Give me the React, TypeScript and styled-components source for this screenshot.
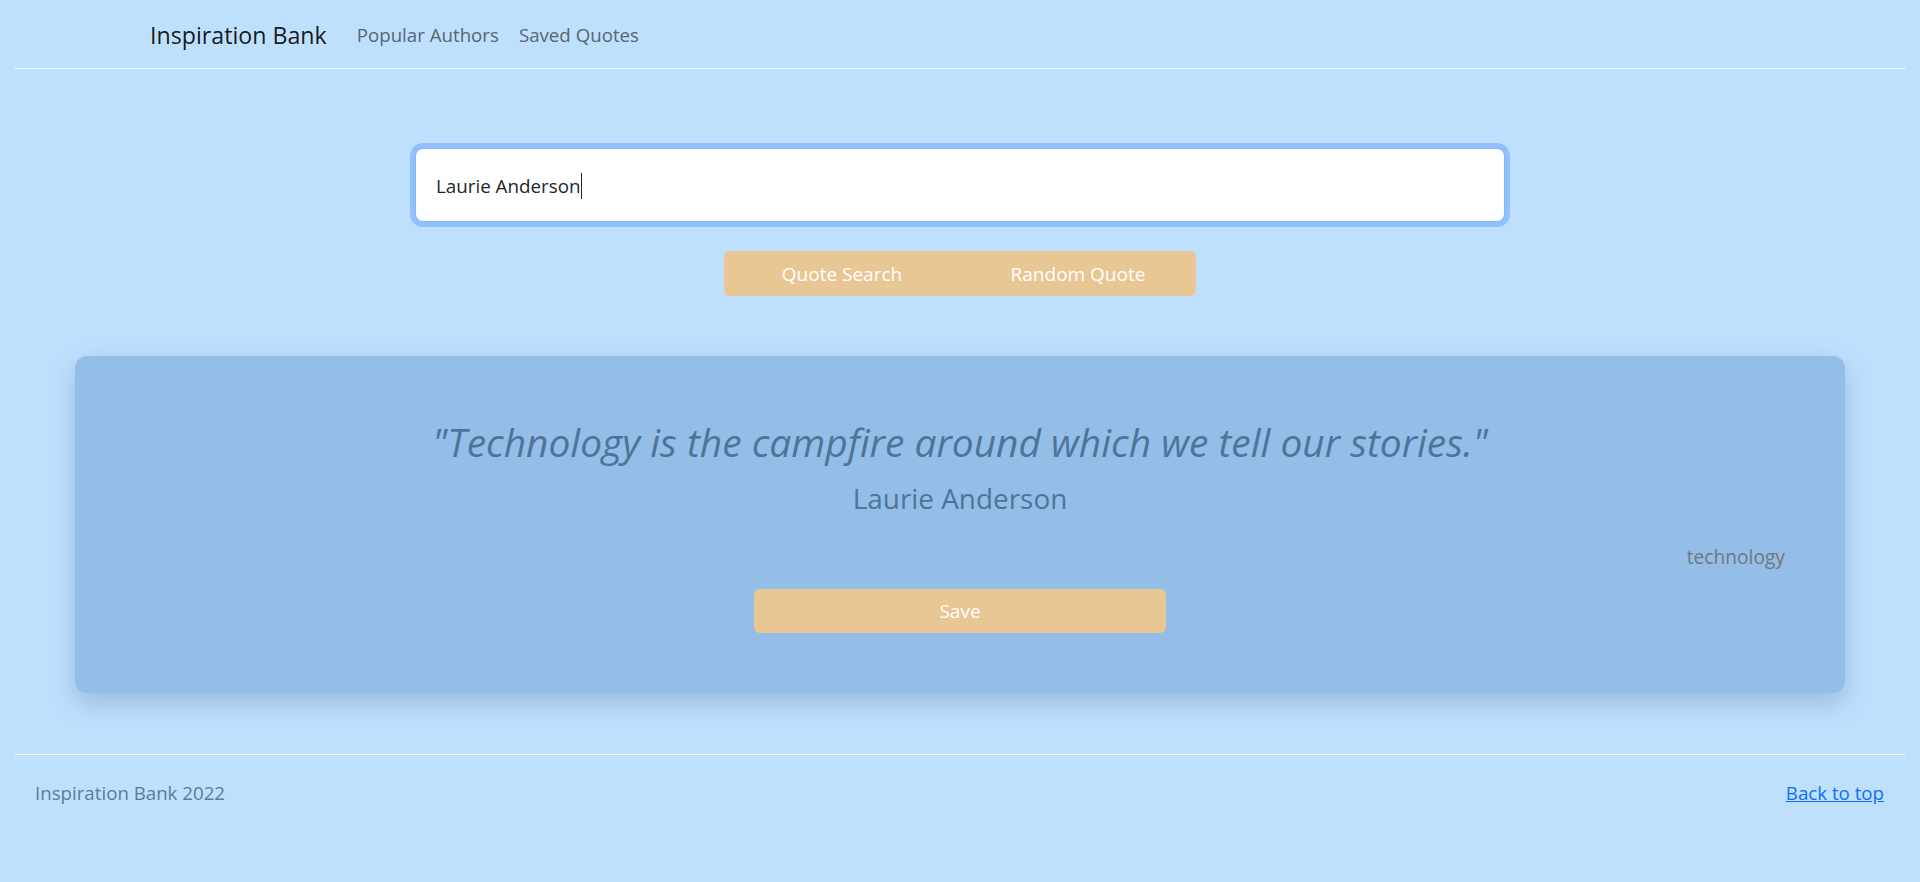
import React from "react";
import styled, { createGlobalStyle } from "styled-components";

const GlobalStyle = createGlobalStyle`
  html, body {
    margin: 0;
    padding: 0;
    background: #bfe0fd;
    min-height: 100%;
  }
  body {
    font-family: "Open Sans", "Noto Sans", "Liberation Sans", sans-serif;
    color: #212529;
  }
  * { box-sizing: border-box; }
`;

const Page = styled.div`
  min-height: 882px;
  padding: 0 15px;
  background: #bfe0fd;
`;

const Header = styled.header`
  height: 69px;
  display: flex;
  align-items: center;
  padding-left: 135px;
  border-bottom: 1px solid #ffffff;
`;

const Brand = styled.a`
  font-size: 23.2px;
  color: rgba(0, 0, 0, 0.9);
  text-decoration: none;
  margin-right: 20px;
  line-height: 32px;
  margin-top: 1px;
`;

const NavLink = styled.a`
  font-size: 18.7px;
  color: #59656f;
  text-decoration: none;
  padding: 0 10px;
  line-height: 28px;
  margin-top: 1px;
`;

const Main = styled.main`
  display: flex;
  flex-direction: column;
  align-items: center;
  padding: 79px 60px 61px;
`;

const SearchField = styled.div`
  width: 1090px;
  height: 74px;
  background: #ffffff;
  border: 1px solid #86b7fe;
  border-radius: 8px;
  box-shadow: 0 0 0 5px #91c1fc;
  display: flex;
  align-items: center;
  padding-left: 20px;
  padding-top: 1px;
  font-size: 18.8px;
  color: #212529;
`;

const Caret = styled.span`
  display: inline-block;
  width: 1px;
  height: 26px;
  background: #212529;
  margin-left: 1px;
`;

const ButtonGroup = styled.div`
  display: flex;
  margin-top: 29px;
  border-radius: 6px;
  overflow: hidden;
`;

const ActionButton = styled.button<{ $width: number }>`
  width: ${(p) => p.$width}px;
  height: 45px;
  border: none;
  background: #e8c795;
  color: #ffffff;
  font-family: "Open Sans", "Noto Sans", "Liberation Sans", sans-serif;
  font-size: 19px;
  cursor: pointer;
  padding: 0;
`;

const Card = styled.section`
  width: 100%;
  margin-top: 60px;
  background: #94bee7;
  border-radius: 12px;
  box-shadow: 0 10px 26px rgba(50, 90, 140, 0.28);
  padding: 60px;
  display: flex;
  flex-direction: column;
  align-items: center;
`;

const Quote = styled.blockquote`
  margin: 0;
  font-size: 38.9px;
  font-style: italic;
  line-height: 52px;
  color: #50739a;
  text-align: center;
`;

const Author = styled.div`
  margin-top: 13px;
  font-size: 27.9px;
  line-height: 34px;
  color: #50739a;
`;

const Tag = styled.div`
  align-self: flex-end;
  margin-top: 29px;
  font-size: 19.2px;
  line-height: 26px;
  color: #6e7780;
`;

const SaveButton = styled.button`
  margin-top: 19px;
  width: 412px;
  height: 44px;
  border: none;
  border-radius: 6px;
  background: #e8c795;
  color: #ffffff;
  font-family: "Open Sans", "Noto Sans", "Liberation Sans", sans-serif;
  font-size: 19px;
  cursor: pointer;
`;

const Footer = styled.footer`
  border-top: 1px solid #ffffff;
  display: flex;
  justify-content: space-between;
  align-items: center;
  padding: 24px 21px 0 20px;
  font-size: 18.7px;
  line-height: 27px;
`;

const FooterText = styled.span`
  color: #5b7b9b;
`;

const TopLink = styled.a`
  color: #0d6efd;
  text-decoration: underline;
`;

export default function App() {
  return (
    <>
      <GlobalStyle />
      <Page>
        <Header>
          <Brand href="#">Inspiration Bank</Brand>
          <NavLink href="#">Popular Authors</NavLink>
          <NavLink href="#">Saved Quotes</NavLink>
        </Header>
        <Main>
          <SearchField>
            Laurie Anderson
            <Caret />
          </SearchField>
          <ButtonGroup>
            <ActionButton $width={236}>Quote Search</ActionButton>
            <ActionButton $width={236}>Random Quote</ActionButton>
          </ButtonGroup>
          <Card>
            <Quote>"Technology is the campfire around which we tell our stories."</Quote>
            <Author>Laurie Anderson</Author>
            <Tag>technology</Tag>
            <SaveButton>Save</SaveButton>
          </Card>
        </Main>
        <Footer>
          <FooterText>Inspiration Bank 2022</FooterText>
          <TopLink href="#">Back to top</TopLink>
        </Footer>
      </Page>
    </>
  );
}
